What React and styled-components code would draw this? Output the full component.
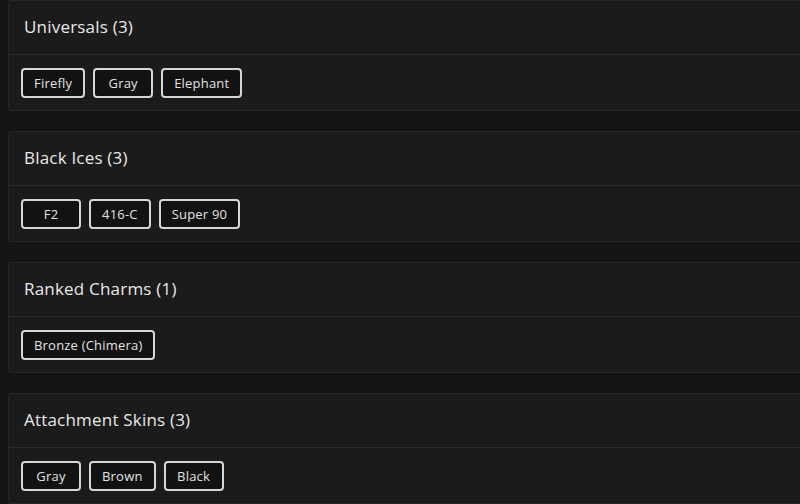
import React from 'react';
import styled, { createGlobalStyle } from 'styled-components';

const GlobalStyle = createGlobalStyle`
  html, body {
    margin: 0;
    padding: 0;
    background: #141414;
    overflow: hidden;
  }
  body {
    font-family: "Open Sans", "Noto Sans", sans-serif;
    color: #e4e4e4;
  }
`;

const Page = styled.div`
  display: flex;
  flex-direction: column;
  gap: 20px;
  padding-left: 8px;
  width: 830px;
`;

const Card = styled.section`
  background: #1b1b1b;
  border: 1px solid #262626;
  border-radius: 2px;
`;

const CardHeader = styled.div`
  height: 53px;
  display: flex;
  align-items: center;
  padding: 0 15px;
  border-bottom: 1px solid #2c2c2c;

  h2 {
    margin: 0 0 2px;
    font-size: 17px;
    font-weight: 500;
    color: #e8e8e8;
    letter-spacing: 0.2px;
  }
`;

const ChipRow = styled.div`
  display: flex;
  gap: 8px;
  padding: 13px 12px 12px;
`;

const Chip = styled.span`
  box-sizing: border-box;
  height: 30px;
  min-width: 60px;
  padding: 0 11px;
  display: inline-flex;
  align-items: center;
  justify-content: center;
  background: #121212;
  border: 2px solid #d6d6d6;
  border-radius: 4px;
  font-size: 13px;
  color: #e2e2e2;
  letter-spacing: 0.2px;
`;

const groups = [
  { title: 'Universals', items: ['Firefly', 'Gray', 'Elephant'] },
  { title: 'Black Ices', items: ['F2', '416-C', 'Super 90'] },
  { title: 'Ranked Charms', items: ['Bronze (Chimera)'] },
  { title: 'Attachment Skins', items: ['Gray', 'Brown', 'Black'] },
];

const App = () => (
  <>
    <GlobalStyle />
    <Page>
      {groups.map((group) => (
        <Card key={group.title}>
          <CardHeader>
            <h2>
              {group.title} ({group.items.length})
            </h2>
          </CardHeader>
          <ChipRow>
            {group.items.map((item) => (
              <Chip key={item}>{item}</Chip>
            ))}
          </ChipRow>
        </Card>
      ))}
    </Page>
  </>
);

export default App;
